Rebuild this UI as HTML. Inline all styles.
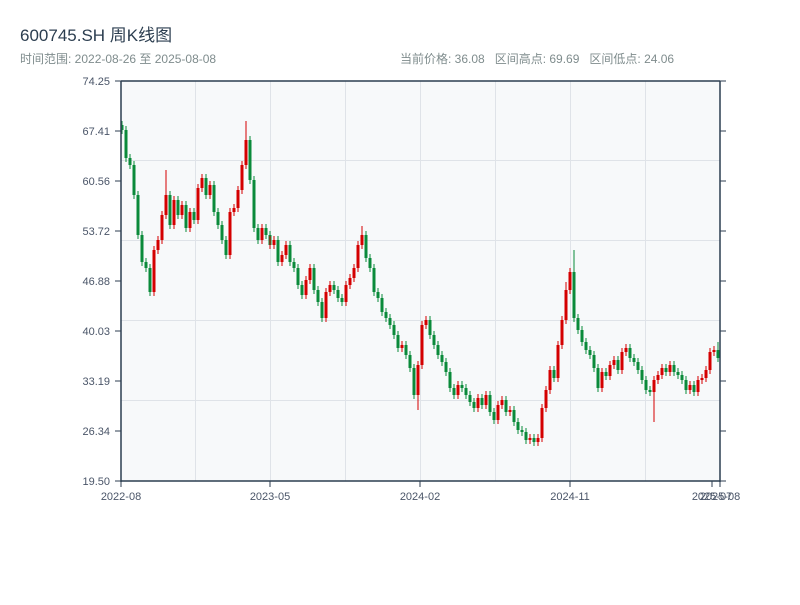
<!DOCTYPE html>
<html><head><meta charset="utf-8"><style>
body{margin:0;width:800px;height:600px;background:#fff;overflow:hidden}
</style></head><body>
<svg width="800" height="600" xmlns="http://www.w3.org/2000/svg" font-family="Liberation Sans, Noto Sans CJK SC, sans-serif">
<text x="20" y="41" font-size="17" fill="#2c3e50">600745.SH 周K线图</text>
<text x="20" y="63" font-size="12" fill="#7f8c8d">时间范围: 2022-08-26 至 2025-08-08</text>
<text x="400" y="63" font-size="12" fill="#7f8c8d" style="white-space:pre">当前价格: 36.08   区间高点: 69.69   区间低点: 24.06</text>
<rect x="121" y="81" width="599" height="400" fill="#f7f9fa"/>
<g stroke="#dfe3e8" stroke-width="1">
<line x1="195.5" y1="81" x2="195.5" y2="481"/><line x1="270.5" y1="81" x2="270.5" y2="481"/><line x1="345.5" y1="81" x2="345.5" y2="481"/><line x1="420.5" y1="81" x2="420.5" y2="481"/><line x1="495.5" y1="81" x2="495.5" y2="481"/><line x1="570.5" y1="81" x2="570.5" y2="481"/><line x1="645.5" y1="81" x2="645.5" y2="481"/>
<line x1="121" y1="160.5" x2="720" y2="160.5"/><line x1="121" y1="240.5" x2="720" y2="240.5"/><line x1="121" y1="320.5" x2="720" y2="320.5"/><line x1="121" y1="400.5" x2="720" y2="400.5"/>
</g>
<g fill="none">
<path stroke="#0a8a3a" stroke-width="1" d="M122 121V134M126 126V162M130 154V169M134 161V199M138 191V239M142 231V266M146 258V272M150 264V296M170 191V229M178 196V219M186 201V232M194 208V224M206 174V199M214 181V216M218 208V229M222 221V244M226 236V259M250 136V184M254 176V232M258 224V244M266 224V239M270 231V249M278 236V266M290 241V266M294 258V272M298 264V289M302 281V299M314 264V294M318 286V306M322 298V322M334 281V294M338 286V302M342 294V306M366 231V262M370 254V272M374 264V296M378 288V302M382 294V316M386 308V322M390 314V329M394 321V339M398 331V352M406 341V359M410 351V372M414 364V399M430 316V339M434 331V349M438 341V359M442 351V366M446 358V376M450 368V392M454 384V399M462 381V392M466 384V399M470 391V406M474 398V412M482 394V409M490 391V416M494 408V424M506 396V416M514 406V426M518 418V434M522 426V436M526 428V444M534 434V446M554 366V382M574 250V322M578 314V334M582 326V346M586 338V354M590 346V359M594 351V372M598 364V392M606 368V380M618 356V374M630 344V362M634 354V366M638 358V374M642 366V384M646 376V394M650 386V396M666 364V376M674 361V376M678 368V379M682 371V384M686 376V394M694 381V396M718 342V362"/>
<path stroke="#0a8a3a" stroke-width="3" d="M122 125V130M126 130V158M130 158V165M134 165V195M138 195V235M142 235V262M146 262V268M150 268V292M170 195V225M178 200V215M186 205V228M194 212V220M206 178V195M214 185V212M218 212V225M222 225V240M226 240V255M250 140V180M254 180V228M258 228V240M266 228V235M270 235V245M278 240V262M290 245V262M294 262V268M298 268V285M302 285V295M314 268V290M318 290V302M322 302V318M334 285V290M338 290V298M342 298V302M366 235V258M370 258V268M374 268V292M378 292V298M382 298V312M386 312V318M390 318V325M394 325V335M398 335V348M406 345V355M410 355V368M414 368V395M430 320V335M434 335V345M438 345V355M442 355V362M446 362V372M450 372V388M454 388V395M462 385V388M466 388V395M470 395V402M474 402V408M482 398V405M490 395V412M494 412V420M506 400V412M514 410V422M518 422V430M522 430V432M526 432V440M534 438V442M554 370V378M574 272V318M578 318V330M582 330V342M586 342V350M590 350V355M594 355V368M598 368V388M606 372V376M618 360V370M630 348V358M634 358V362M638 362V370M642 370V380M646 380V390M650 390V392M666 368V372M674 365V372M678 372V375M682 375V380M686 380V390M694 385V392M718 350V358"/>
<path stroke="#d40000" stroke-width="1" d="M154 246V296M158 236V254M162 211V244M166 170V219M174 196V229M182 201V219M190 208V232M198 184V224M202 174V192M210 181V199M230 208V259M234 204V216M238 186V212M242 161V194M246 121V169M262 224V244M270 236V249M274 236V249M282 251V266M286 241V259M306 276V299M310 264V284M326 288V322M330 281V296M346 281V306M350 274V289M354 264V282M358 241V272M362 226V249M402 341V352M418 361V410M422 321V369M426 316V329M458 381V399M478 394V412M486 391V409M498 401V424M502 396V409M510 406V416M530 434V444M538 434V446M542 404V442M546 386V412M550 366V394M558 341V382M562 316V349M566 282V324M570 268V294M602 368V392M610 361V380M614 356V369M622 348V374M626 344V356M654 376V422M658 371V384M662 364V379M670 361V376M690 381V394M698 376V396M702 374V384M706 366V382M710 348V374M714 346V356"/>
<path stroke="#d40000" stroke-width="3" d="M154 250V292M158 240V250M162 215V240M166 195V215M174 200V225M182 205V215M190 212V228M198 188V220M202 178V188M210 185V195M230 212V255M234 208V212M238 190V208M242 165V190M246 140V165M262 228V240M274 240V245M282 255V262M286 245V255M306 280V295M310 268V280M326 292V318M330 285V292M346 285V302M350 278V285M354 268V278M358 245V268M362 235V245M402 345V348M418 365V395M422 325V365M426 320V325M458 385V395M478 398V408M486 395V405M498 405V420M502 400V405M510 410V412M530 438V440M538 438V442M542 408V438M546 390V408M550 370V390M558 345V378M562 320V345M566 290V320M570 272V290M602 372V388M610 365V376M614 360V365M622 352V370M626 348V352M654 380V392M658 375V380M662 368V375M670 365V372M690 385V390M698 380V392M702 378V380M706 370V378M710 352V370M714 350V352"/>
</g>
<g stroke="#2c3e50" stroke-width="1.5" fill="none">
<line x1="121" y1="81" x2="121" y2="482"/><line x1="720" y1="81" x2="720" y2="482"/><line x1="121" y1="481" x2="720" y2="481"/><line x1="121" y1="81" x2="720" y2="81"/>
</g>
<g stroke="#2c3e50" stroke-width="1">
<line x1="115" y1="81" x2="121" y2="81"/><line x1="115" y1="131" x2="121" y2="131"/><line x1="115" y1="181" x2="121" y2="181"/><line x1="115" y1="231" x2="121" y2="231"/><line x1="115" y1="281" x2="121" y2="281"/><line x1="115" y1="331" x2="121" y2="331"/><line x1="115" y1="381" x2="121" y2="381"/><line x1="115" y1="431" x2="121" y2="431"/><line x1="115" y1="481" x2="121" y2="481"/>
<line x1="720" y1="81" x2="726" y2="81"/><line x1="720" y1="131" x2="726" y2="131"/><line x1="720" y1="181" x2="726" y2="181"/><line x1="720" y1="231" x2="726" y2="231"/><line x1="720" y1="281" x2="726" y2="281"/><line x1="720" y1="331" x2="726" y2="331"/><line x1="720" y1="381" x2="726" y2="381"/><line x1="720" y1="431" x2="726" y2="431"/><line x1="720" y1="481" x2="726" y2="481"/>
<line x1="121" y1="481" x2="121" y2="487"/><line x1="270" y1="481" x2="270" y2="487"/><line x1="420" y1="481" x2="420" y2="487"/><line x1="570" y1="481" x2="570" y2="487"/><line x1="712" y1="481" x2="712" y2="487"/><line x1="720" y1="481" x2="720" y2="487"/>
</g>
<g font-size="11" fill="#4a5568" text-anchor="end">
<text x="110" y="85">74.25</text><text x="110" y="135">67.41</text><text x="110" y="185">60.56</text><text x="110" y="235">53.72</text><text x="110" y="285">46.88</text><text x="110" y="335">40.03</text><text x="110" y="385">33.19</text><text x="110" y="435">26.34</text><text x="110" y="485">19.50</text>
</g>
<g font-size="11" fill="#4a5568" text-anchor="middle">
<text x="121" y="500">2022-08</text><text x="270" y="500">2023-05</text><text x="420" y="500">2024-02</text><text x="570" y="500">2024-11</text><text x="712" y="500">2025-07</text><text x="720" y="500">2025-08</text>
</g>
</svg>
</body></html>
